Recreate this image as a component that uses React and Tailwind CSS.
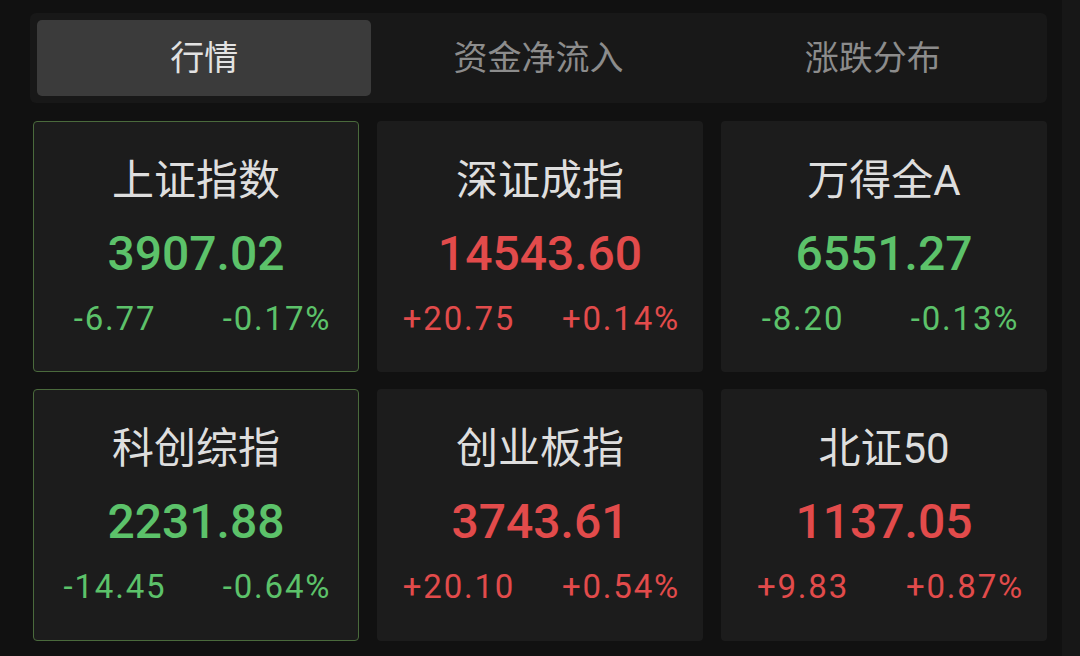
import React from 'react';

const tabs = ['行情', '资金净流入', '涨跌分布'];

const indices = [
  { name: '上证指数', price: '3907.02', change: '-6.77', pct: '-0.17%', up: false, picked: true },
  { name: '深证成指', price: '14543.60', change: '+20.75', pct: '+0.14%', up: true },
  { name: '万得全A', price: '6551.27', change: '-8.20', pct: '-0.13%', up: false },
  { name: '科创综指', price: '2231.88', change: '-14.45', pct: '-0.64%', up: false, picked: true },
  { name: '创业板指', price: '3743.61', change: '+20.10', pct: '+0.54%', up: true },
  { name: '北证50', price: '1137.05', change: '+9.83', pct: '+0.87%', up: true },
];

function IndexCard({ item }) {
  const tone = item.up ? 'text-[#e24b4b]' : 'text-[#5cc26a]';
  return (
    <div
      className={`flex flex-col items-center rounded-[4px] bg-[#1c1c1c] pt-[34px] border ${
        item.picked ? 'border-[#4a6a3c]' : 'border-transparent'
      }`}
    >
      <div className="text-[42px] leading-[50px] text-[#dedede]">{item.name}</div>
      <div className={`mt-[18px] text-[48px] leading-[60px] font-medium ${tone}`}>{item.price}</div>
      <div className={`mt-[15px] grid w-full grid-cols-2 text-[33px] leading-[40px] tracking-[1.8px] ${tone}`}>
        <span className="text-center">{item.change}</span>
        <span className="text-center">{item.pct}</span>
      </div>
    </div>
  );
}

export default function App() {
  return (
    <div
      className="flex h-[656px] w-[1080px] overflow-hidden bg-[#111111]"
      style={{ fontFamily: 'Roboto, "Noto Sans CJK SC", sans-serif' }}
    >
      <div className="flex w-[1062px] flex-col pl-[30px] pr-[15px] pt-[13px]">
        <div className="flex h-[90px] rounded-[6px] bg-[#181818] px-[7px] py-[7px]">
          {tabs.map((t, i) => (
            <div
              key={t}
              className={`flex flex-1 items-center justify-center rounded-[5px] text-[34px] ${
                i === 0 ? 'bg-[#3b3b3b] text-[#e2e2e2]' : 'text-[#8c8c8c]'
              }`}
            >
              {t}
            </div>
          ))}
        </div>
        <div className="mt-[18px] ml-[3px] grid grid-cols-3 grid-rows-[251px_252px] gap-x-[18px] gap-y-[17px]">
          {indices.map((item) => (
            <IndexCard key={item.name} item={item} />
          ))}
        </div>
      </div>
      <div className="flex-1 bg-[#171717]" />
    </div>
  );
}
